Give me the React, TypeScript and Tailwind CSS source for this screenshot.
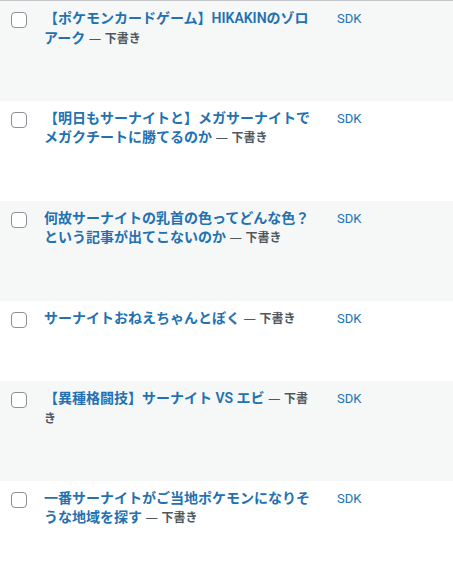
import React from "react";

type Post = { id: number; title: string };

const posts: Post[] = [
  { id: 1, title: "【ポケモンカードゲーム】HIKAKINのゾロアーク" },
  { id: 2, title: "【明日もサーナイトと】メガサーナイトでメガクチートに勝てるのか" },
  { id: 3, title: "何故サーナイトの乳首の色ってどんな色？という記事が出てこないのか" },
  { id: 4, title: "サーナイトおねえちゃんとぼく" },
  { id: 5, title: "【異種格闘技】サーナイト VS エビ" },
  { id: 6, title: "一番サーナイトがご当地ポケモンになりそうな地域を探す" },
];

const font = {
  fontFamily:
    '"Segoe UI", Roboto, "Noto Sans CJK JP", "Noto Sans", sans-serif',
};

const stateFont = {
  fontFamily: '"Noto Sans CJK JP", "Noto Sans", sans-serif',
};

export default function App() {
  return (
    <div className="w-[453px] h-[565px] overflow-hidden bg-white" style={font}>
      {/* Posts table */}
      <div className="border-t border-[#c3c4c7]">
        {posts.map((post, i) => (
          <div
            key={post.id}
            className={`flex ${i % 2 === 0 ? "bg-[#f6f7f7]" : "bg-white"}`}
          >
            {/* Check column */}
            <div className="w-[34px] shrink-0 pl-[11px] pt-[11px]">
              <div className="w-4 h-4 rounded-[4px] border border-[#8c8f94] bg-white" />
            </div>

            {/* Title column */}
            <div className="w-[293px] shrink-0 px-[10px] pt-2 pb-2">
              <div className="text-[14px] leading-[19.6px] font-semibold">
                <span className="text-[#2271b1]">{post.title}</span>{" "}
                <span
                  className="text-[#50575e] leading-none font-normal"
                  style={stateFont}
                >
                  —
                </span>{" "}
                <span
                  className="text-[#50575e] text-[12px] leading-none font-semibold"
                  style={stateFont}
                >
                  下書き
                </span>
              </div>
              {/* hidden row actions */}
              <div className="h-[44.7px]" />
            </div>

            {/* Author column */}
            <div className="flex-1 px-[10px] pt-2 text-[13px] leading-[19.6px] text-[#2271b1]">
              SDK
            </div>
          </div>
        ))}
      </div>
    </div>
  );
}
